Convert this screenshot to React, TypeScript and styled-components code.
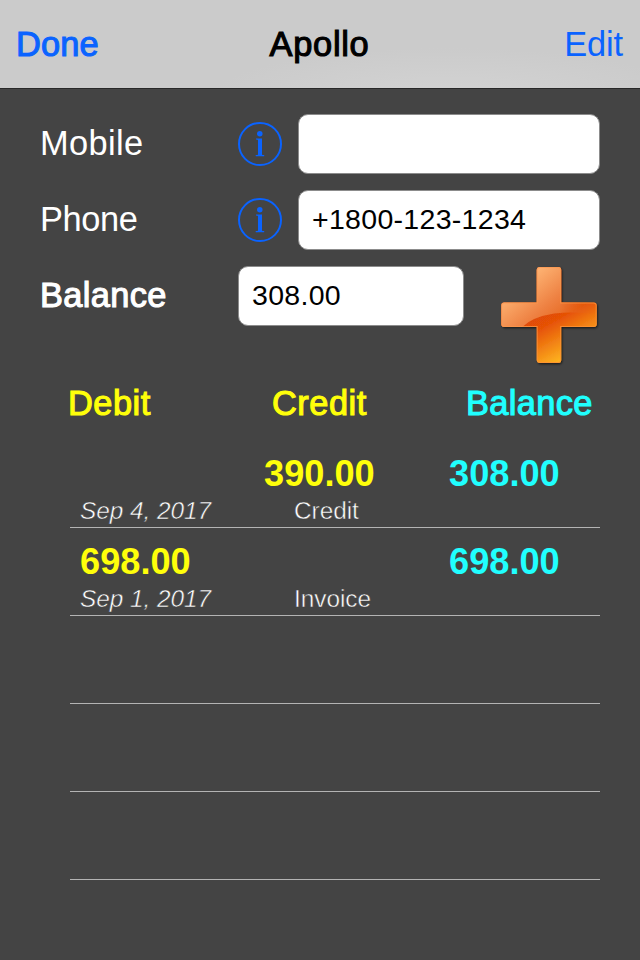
import React from "react";
import styled, { createGlobalStyle } from "styled-components";

const GlobalStyle = createGlobalStyle`
  * { box-sizing: border-box; }
  body { margin: 0; background: #444; }
`;

const Screen = styled.main`
  width: 640px;
  height: 960px;
  background: #444444;
  color: #fff;
  font-family: "Liberation Sans", Arial, sans-serif;
  overflow: hidden;
`;

const NavBar = styled.header`
  height: 89px;
  display: grid;
  grid-template-columns: 1fr auto 1fr;
  align-items: center;
  padding: 0 17px 1px 16px;
  border-bottom: 1px solid #282828;
  background: radial-gradient(ellipse 240px 48px at 450px 96px, #d3d3d3, #cbcbcb);
`;

/* Medium weight comes from a thin outline around the regular face. */
const Label = styled.span<{ $medium?: boolean; $spacing?: number }>`
  font-size: 34.4px;
  line-height: 40px;
  white-space: nowrap;
  letter-spacing: ${(p) => p.$spacing ?? 0}px;
  -webkit-text-stroke: ${(p) => (p.$medium ? "1.1px currentColor" : "0")};
`;

const NavTitle = styled(Label)`
  color: #000;
`;

const NavButton = styled(Label).attrs({ as: "button" })<{ $end?: boolean }>`
  border: 0;
  padding: 0;
  background: none;
  font-family: inherit;
  color: #0a63ff;
  justify-self: ${(p) => (p.$end ? "end" : "start")};
`;

const Form = styled.section`
  display: flex;
  flex-direction: column;
  gap: 16px;
  height: 276px;
  padding: 25px 0 0 40px;
`;

const FormRow = styled.div`
  display: flex;
  height: 60px;
  align-items: center;
`;

const Caption = styled.div`
  width: 198px;
  flex-shrink: 0;
  padding-bottom: 3px;
`;

const Field = styled.div<{ $width: number }>`
  width: ${(p) => p.$width}px;
  flex-shrink: 0;
  height: 60px;
  border-radius: 10px;
  border: 1px solid #8c8c8c;
  background: #fff;
  color: #000;
  padding: 0 12px 0 13px;
  font-size: 28.5px;
  line-height: 57px;
  letter-spacing: 0.3px;
  white-space: nowrap;
`;

const InfoButton = styled.button`
  width: 44px;
  height: 44px;
  padding: 0;
  margin-right: 16px;
  border: 0;
  background: none;
  svg { display: block; }
`;

const AddButton = styled.button`
  align-self: flex-start;
  flex-shrink: 0;
  width: 104px;
  height: 104px;
  margin-left: 34px;
  padding: 0;
  border: 0;
  background: none;
  svg { display: block; }
`;

const TableHead = styled.div`
  display: grid;
  grid-template-columns: 204px 194px 1fr;
  height: 75px;
  padding: 18px 0 0 68px;
`;

const Heading = styled(Label)<{ $tone: string }>`
  color: ${(p) => p.$tone};
`;

const Ledger = styled.div`
  margin: 0 40px 0 70px;
`;

const Entry = styled.div`
  height: 88px;
  display: grid;
  grid-template-columns: 184px 185px 1fr;
  grid-template-rows: 41px 32px;
  padding: 14px 0 0 10px;
  border-bottom: 1px solid #b4b4b4;
`;

const Amount = styled.div<{ $tone: string }>`
  font-size: 36.2px;
  line-height: 39px;
  font-weight: 700;
  color: ${(p) => p.$tone};
`;

/* A background-coloured outline thins the strokes to a light weight. */
const Detail = styled.div<{ $italic?: boolean }>`
  font-size: 24.4px;
  line-height: 32px;
  font-style: ${(p) => (p.$italic ? "italic" : "normal")};
  letter-spacing: ${(p) => (p.$italic ? -0.05 : -0.05)}px;
  padding-left: ${(p) => (p.$italic ? 0 : 30)}px;
  -webkit-text-stroke: 0.5px #444;
  white-space: nowrap;
`;

const YELLOW = "#ffff0a";
const CYAN = "#20ffff";

const InfoIcon = () => (
  <svg width="44" height="44" viewBox="0 0 44 44" fill="#0a63ff">
    <circle cx="22" cy="22" r="21" fill="none" stroke="#0a63ff" strokeWidth="2" />
    <circle cx="21.8" cy="11.8" r="2.75" />
    <path d="M18 16.6H24V32.4Q24 33 26.2 33.1V34.2H17.7V33.1Q20 33 20 32.4V18.2Q20 17.7 18 17.6Z" />
  </svg>
);

const PLUS =
  "M41 4H58Q61 4 61 7V39.5H93.5Q96.5 39.5 96.5 42.5V61Q96.5 64 93.5 64H61V97Q61 100 58 100H40Q36.5 100 36.5 97V64H4Q1 64 1 61V42.5Q1 39.5 4 39.5H36.5V7Q36.5 4 40 4Z";

const PlusIcon = () => (
  <svg width="104" height="104" viewBox="0 0 104 104">
    <defs>
      <linearGradient id="body" gradientUnits="userSpaceOnUse" x1="32" y1="40" x2="64" y2="98">
        <stop offset="0" stopColor="#d84408" />
        <stop offset="0.4" stopColor="#e65206" />
        <stop offset="1" stopColor="#ffb822" />
      </linearGradient>
      <linearGradient id="gloss" gradientUnits="userSpaceOnUse" x1="22" y1="14" x2="62" y2="62">
        <stop offset="0" stopColor="#ffb878" />
        <stop offset="0.6" stopColor="#ee8142" />
        <stop offset="1" stopColor="#e5651c" />
      </linearGradient>
      <linearGradient id="rim" x1="0" y1="0" x2="1" y2="1">
        <stop offset="0" stopColor="#f99c61" />
        <stop offset="1" stopColor="#ff8d25" />
      </linearGradient>
      <linearGradient id="fade" gradientUnits="userSpaceOnUse" x1="60" y1="0" x2="96" y2="0">
        <stop offset="0" stopColor="#fff" />
        <stop offset="1" stopColor="#fff" stopOpacity="0" />
      </linearGradient>
      <mask id="glossMask"><rect width="104" height="104" fill="url(#fade)" /></mask>
      <clipPath id="shape"><path d={PLUS} /></clipPath>
      <filter id="shadow" x="-10%" y="-10%" width="120%" height="120%">
        <feDropShadow dx="1" dy="1.2" stdDeviation="1.1" floodColor="#000" floodOpacity="0.65" />
      </filter>
    </defs>
    <path d={PLUS} transform="translate(2.2 -3)" fill="url(#body)" filter="url(#shadow)" />
    <g transform="translate(2.2 -3)" clipPath="url(#shape)">
      <path d="M0 0H104V52Q76 48 54 50.5Q32 54 22 64H0Z" fill="url(#gloss)" mask="url(#glossMask)" />
      <path d={PLUS} fill="none" stroke="url(#rim)" strokeWidth="2" strokeOpacity="0.8" />
    </g>
  </svg>
);

const contacts = [
  { label: "Mobile", value: "", spacing: 0.35 },
  { label: "Phone", value: "+1800-123-1234", spacing: -0.4 },
];

const entries = [
  { debit: "", credit: "390.00", balance: "308.00", date: "Sep 4, 2017", kind: "Credit" },
  { debit: "698.00", credit: "", balance: "698.00", date: "Sep 1, 2017", kind: "Invoice" },
  null,
  null,
  null,
];

export default function App() {
  return (
    <Screen>
      <GlobalStyle />
      <NavBar>
        <NavButton $medium $spacing={0.1}>Done</NavButton>
        <NavTitle $medium $spacing={0.7}>Apollo</NavTitle>
        <NavButton $end $spacing={-0.1}>Edit</NavButton>
      </NavBar>
      <Form>
        {contacts.map((c) => (
          <FormRow key={c.label}>
            <Caption><Label $spacing={c.spacing}>{c.label}</Label></Caption>
            <InfoButton aria-label={`${c.label} info`}><InfoIcon /></InfoButton>
            <Field $width={302}>{c.value}</Field>
          </FormRow>
        ))}
        <FormRow>
          <Caption><Label $medium $spacing={0.35}>Balance</Label></Caption>
          <Field $width={226}>308.00</Field>
          <AddButton aria-label="Add entry"><PlusIcon /></AddButton>
        </FormRow>
      </Form>
      <TableHead>
        <Heading $medium $spacing={0.5} $tone={YELLOW}>Debit</Heading>
        <Heading $medium $spacing={0.5} $tone={YELLOW}>Credit</Heading>
        <Heading $medium $spacing={0.35} $tone={CYAN}>Balance</Heading>
      </TableHead>
      <Ledger>
        {entries.map((e, i) => (
          <Entry key={i}>
            {e && (
              <>
                <Amount $tone={YELLOW}>{e.debit}</Amount>
                <Amount $tone={YELLOW}>{e.credit}</Amount>
                <Amount $tone={CYAN}>{e.balance}</Amount>
                <Detail $italic>{e.date}</Detail>
                <Detail>{e.kind}</Detail>
              </>
            )}
          </Entry>
        ))}
      </Ledger>
    </Screen>
  );
}
